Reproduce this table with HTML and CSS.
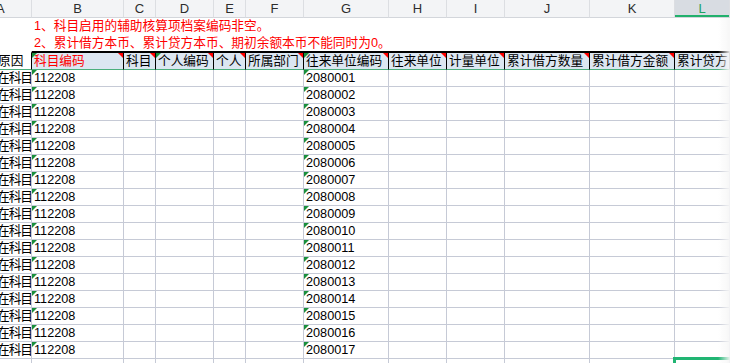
FILE: index.html
```html
<!DOCTYPE html>
<html lang="zh-CN">
<head>
<meta charset="utf-8">
<title>Sheet</title>
<link rel="stylesheet" href="styles.css">
</head>
<body>
<div class="sheet">
  <div class="row colheads">
    <div class="c a"><span>A</span></div><div class="c">B</div><div class="c">C</div><div class="c">D</div><div class="c">E</div><div class="c">F</div><div class="c">G</div><div class="c">H</div><div class="c">I</div><div class="c">J</div><div class="c">K</div><div class="c sel">L</div>
  </div>
  <div class="notes">
    <p>1、科目启用的辅助核算项档案编码非空。</p>
    <p>2、累计借方本币、累计贷方本币、期初余额本币不能同时为0。</p>
  </div>
  <div class="row hdr">
    <div class="c a">原因</div>
    <div class="c red g r">科目编码</div>
    <div class="c r">科目</div>
    <div class="c g r">个人编码</div>
    <div class="c r">个人</div>
    <div class="c r">所属部门</div>
    <div class="c g r">往来单位编码</div>
    <div class="c r">往来单位</div>
    <div class="c r">计量单位</div>
    <div class="c r">累计借方数量</div>
    <div class="c r">累计借方金额</div>
    <div class="c">累计贷方</div>
  </div>
  <div class="row"><div class="c a">在科目</div><div class="c g">112208</div><div class="c"></div><div class="c"></div><div class="c"></div><div class="c"></div><div class="c g">2080001</div><div class="c"></div><div class="c"></div><div class="c"></div><div class="c"></div><div class="c"></div></div>
  <div class="row"><div class="c a">在科目</div><div class="c g">112208</div><div class="c"></div><div class="c"></div><div class="c"></div><div class="c"></div><div class="c g">2080002</div><div class="c"></div><div class="c"></div><div class="c"></div><div class="c"></div><div class="c"></div></div>
  <div class="row"><div class="c a">在科目</div><div class="c g">112208</div><div class="c"></div><div class="c"></div><div class="c"></div><div class="c"></div><div class="c g">2080003</div><div class="c"></div><div class="c"></div><div class="c"></div><div class="c"></div><div class="c"></div></div>
  <div class="row"><div class="c a">在科目</div><div class="c g">112208</div><div class="c"></div><div class="c"></div><div class="c"></div><div class="c"></div><div class="c g">2080004</div><div class="c"></div><div class="c"></div><div class="c"></div><div class="c"></div><div class="c"></div></div>
  <div class="row"><div class="c a">在科目</div><div class="c g">112208</div><div class="c"></div><div class="c"></div><div class="c"></div><div class="c"></div><div class="c g">2080005</div><div class="c"></div><div class="c"></div><div class="c"></div><div class="c"></div><div class="c"></div></div>
  <div class="row"><div class="c a">在科目</div><div class="c g">112208</div><div class="c"></div><div class="c"></div><div class="c"></div><div class="c"></div><div class="c g">2080006</div><div class="c"></div><div class="c"></div><div class="c"></div><div class="c"></div><div class="c"></div></div>
  <div class="row"><div class="c a">在科目</div><div class="c g">112208</div><div class="c"></div><div class="c"></div><div class="c"></div><div class="c"></div><div class="c g">2080007</div><div class="c"></div><div class="c"></div><div class="c"></div><div class="c"></div><div class="c"></div></div>
  <div class="row"><div class="c a">在科目</div><div class="c g">112208</div><div class="c"></div><div class="c"></div><div class="c"></div><div class="c"></div><div class="c g">2080008</div><div class="c"></div><div class="c"></div><div class="c"></div><div class="c"></div><div class="c"></div></div>
  <div class="row"><div class="c a">在科目</div><div class="c g">112208</div><div class="c"></div><div class="c"></div><div class="c"></div><div class="c"></div><div class="c g">2080009</div><div class="c"></div><div class="c"></div><div class="c"></div><div class="c"></div><div class="c"></div></div>
  <div class="row"><div class="c a">在科目</div><div class="c g">112208</div><div class="c"></div><div class="c"></div><div class="c"></div><div class="c"></div><div class="c g">2080010</div><div class="c"></div><div class="c"></div><div class="c"></div><div class="c"></div><div class="c"></div></div>
  <div class="row"><div class="c a">在科目</div><div class="c g">112208</div><div class="c"></div><div class="c"></div><div class="c"></div><div class="c"></div><div class="c g">2080011</div><div class="c"></div><div class="c"></div><div class="c"></div><div class="c"></div><div class="c"></div></div>
  <div class="row"><div class="c a">在科目</div><div class="c g">112208</div><div class="c"></div><div class="c"></div><div class="c"></div><div class="c"></div><div class="c g">2080012</div><div class="c"></div><div class="c"></div><div class="c"></div><div class="c"></div><div class="c"></div></div>
  <div class="row"><div class="c a">在科目</div><div class="c g">112208</div><div class="c"></div><div class="c"></div><div class="c"></div><div class="c"></div><div class="c g">2080013</div><div class="c"></div><div class="c"></div><div class="c"></div><div class="c"></div><div class="c"></div></div>
  <div class="row"><div class="c a">在科目</div><div class="c g">112208</div><div class="c"></div><div class="c"></div><div class="c"></div><div class="c"></div><div class="c g">2080014</div><div class="c"></div><div class="c"></div><div class="c"></div><div class="c"></div><div class="c"></div></div>
  <div class="row"><div class="c a">在科目</div><div class="c g">112208</div><div class="c"></div><div class="c"></div><div class="c"></div><div class="c"></div><div class="c g">2080015</div><div class="c"></div><div class="c"></div><div class="c"></div><div class="c"></div><div class="c"></div></div>
  <div class="row"><div class="c a">在科目</div><div class="c g">112208</div><div class="c"></div><div class="c"></div><div class="c"></div><div class="c"></div><div class="c g">2080016</div><div class="c"></div><div class="c"></div><div class="c"></div><div class="c"></div><div class="c"></div></div>
  <div class="row"><div class="c a">在科目</div><div class="c g">112208</div><div class="c"></div><div class="c"></div><div class="c"></div><div class="c"></div><div class="c g">2080017</div><div class="c"></div><div class="c"></div><div class="c"></div><div class="c"></div><div class="c"></div></div>
  <div class="row last"><div class="c a"></div><div class="c"></div><div class="c"></div><div class="c"></div><div class="c"></div><div class="c"></div><div class="c"></div><div class="c"></div><div class="c"></div><div class="c"></div><div class="c"></div><div class="c"><div class="selbox"></div></div></div>
</div>
<div class="fade"></div>
</body>
</html>
```
FILE: styles.css
```css
* { box-sizing: border-box; margin: 0; padding: 0; }
html, body { margin: 0; background: #fff; }
body {
  width: 730px;
  height: 363px;
  overflow: hidden;
  font-family: "Liberation Sans", "Noto Sans CJK SC", sans-serif;
  font-size: 12.7px;
  color: #000;
}
.sheet { width: 730px; }
.row {
  display: grid;
  grid-template-columns: 32px 92px 32px 58px 32px 58px 85px 58px 58px 85px 85px 1fr;
}
.c {
  position: relative;
  height: 17px;
  line-height: 16px;
  border-right: 1px solid #c6cad6;
  border-bottom: 1px solid #c6cad6;
  padding-left: 2px;
  white-space: nowrap;
  overflow: hidden;
}
.c.a { padding-left: 0; text-indent: -3px; letter-spacing: -1px; }

/* column letters */
.colheads .c {
  height: 18px;
  line-height: 17px;
  background: #f3f4f6;
  border-right-color: #dcdee2;
  border-bottom-color: #d3d6db;
  text-align: center;
  padding: 0;
  text-indent: 0;
  letter-spacing: 0;
  color: #2d2d2d;
  font-size: 13px;
}
.colheads .c.a { text-align: left; }
.colheads .c.a span { margin-left: -4px; }
.colheads .sel {
  background: #d8dce2;
  color: #1ea362;
  box-shadow: inset 0 -2px 0 #21b06c;
}

/* notes */
.notes {
  height: 33px;
  padding-left: 34px;
  color: #f00;
  line-height: 16.5px;
  white-space: nowrap;
}

/* header row */
.hdr .c {
  height: 19px;
  line-height: 16px;
  border-top: 2px solid #000;
  border-right-color: #000;
  border-bottom-color: #4caf7d;
  background: #dce6f1;
}
.hdr .c.a { border-top-color: #fff; background: #fff; text-indent: -2px; letter-spacing: 0; }
.red { color: #f00; }

/* cell indicators */
.g::before {
  content: "";
  position: absolute;
  left: 0;
  top: 0;
  border-top: 5px solid #1a8f3c;
  border-right: 5px solid transparent;
}
.r::after {
  content: "";
  position: absolute;
  right: 0;
  top: 0;
  border-top: 5px solid #f00;
  border-left: 5px solid transparent;
}

/* selection */
.last .c { overflow: visible; }
.selbox {
  position: absolute;
  left: -2px;
  top: -2px;
  right: -20px;
  height: 24px;
  border-top: 3px solid #21b573;
  border-left: 3px solid #21b573;
}

.fade {
  position: fixed;
  top: 18px;
  right: 0;
  bottom: 0;
  width: 12px;
  background: linear-gradient(to right, rgba(255, 255, 255, 0), rgba(246, 246, 246, 0.95));
}
```
